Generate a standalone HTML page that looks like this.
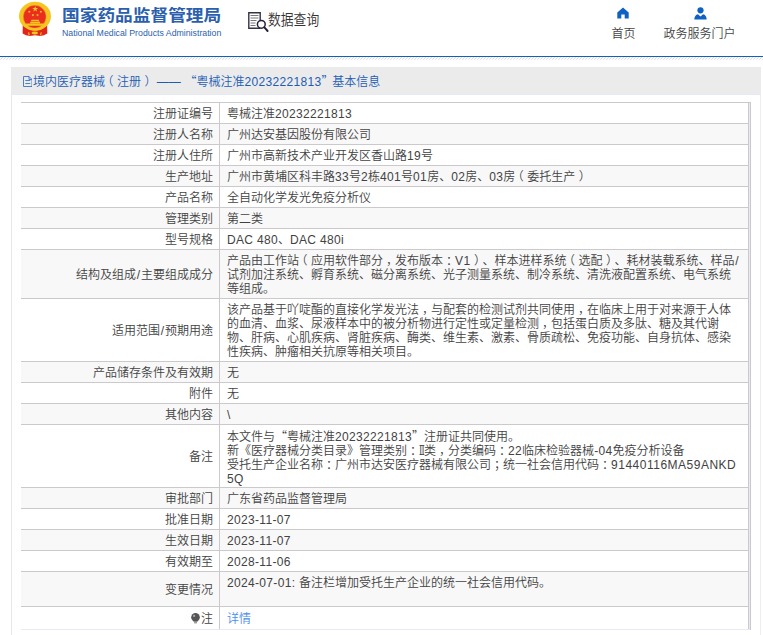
<!DOCTYPE html>
<html lang="zh-CN">
<head>
<meta charset="utf-8">
<title>国家药品监督管理局 数据查询</title>
<style>
html,body{margin:0;padding:0}
body{width:763px;height:635px;overflow:hidden;background:#fff;position:relative;font-family:"Liberation Sans","Noto Sans CJK SC",sans-serif;font-size:12px;font-weight:350;color:#424242;line-height:14px;text-spacing-trim:space-all}
.abs{position:absolute}
.n{letter-spacing:.33px}
.n2{letter-spacing:.5px}
.sl{display:inline-block;width:5px;text-align:center}
.q{font-family:"Noto Sans CJK SC",sans-serif}
.r{font-family:"DejaVu Serif",serif;display:inline-block;width:5px;transform-origin:0 50%;transform:scaleX(.7)}
.q2{margin-right:-5px}
#logo{left:18px;top:0}
#t1{left:62px;top:5.3px;font-size:17.7px;line-height:24px;font-weight:bold;color:#2b5fae;white-space:nowrap;transform-origin:0 0;transform:scaleY(.91)}
#t2{left:62px;top:28.3px;font-size:8.78px;line-height:10px;color:#2b5fae;white-space:nowrap}
#sj{left:248px;top:11.800px}
#sjt{left:268px;top:10.200px;font-size:15px;line-height:20px;color:#333;white-space:nowrap;transform-origin:0 0;transform:scaleX(.853)}
.nav{top:26.500px;height:14px;text-align:center;white-space:nowrap;color:#444}
#bl{left:0;top:56px;width:763px;height:1px;background:#0f62c2}
#hatch{left:0;top:57px;width:763px;height:3px}
#box{left:11px;top:67px;width:750px;height:600px;box-sizing:border-box;border-left:1px solid #e7e7e7;border-right:1px solid #eee}
#bar{left:11px;top:67px;width:750px;height:27px;background:#ebebeb;border-bottom:1px solid #e6eaf6;color:#1c5db5;white-space:nowrap}
#bar .tx{position:absolute;left:22px;top:7px;line-height:14px;text-spacing-trim:space-all}
#tb{left:21px;top:102px;width:730px;height:1px;background:#cbc9cb}
#rb{left:748px;top:103px;width:3px;height:527px;box-sizing:border-box;border-left:1px solid #cbc9cb;border-right:1px solid #cbc9cb;background:#e8eaf5}
.row{position:absolute;left:21px;width:727px;box-sizing:border-box;border-bottom:1px solid #cbc9cb;background:#fff}
.row.g{background:#f8f8f8}
.row.last{border-bottom-color:#e6eaf6}
.k{position:absolute;left:0;top:0;bottom:0;width:199px;box-sizing:border-box;border-right:1px solid #cbc9cb;display:flex;align-items:center;justify-content:flex-end;padding-right:6px;white-space:nowrap}
.v{position:absolute;left:199px;top:0;bottom:0;right:0;display:flex;align-items:center;padding-left:7px;white-space:nowrap}
.row.top .v{align-items:flex-start;padding-top:3px}
.k>span,.v>span{position:relative;top:1px}
.p1,.p2,.p3{position:relative}.p1{left:-3.500px}.p2{left:3.500px}.p3{left:3px}
.lk{color:#4a8df0}
.bulb{vertical-align:-1px;margin-right:2px;position:relative;left:.8px}
</style>
</head>
<body>
<svg id="logo" class="abs" width="36" height="38" viewBox="18 0 36 38">
  <path d="M22.800 24L22.600 33.400Q26 35.800 29.500 35.900L35 35.300L40.500 35.900Q44 35.800 47.300 33.400L47.100 24Z" fill="#e0261a"/>
  <ellipse cx="35" cy="16.300" rx="16" ry="14.500" fill="#f5c520"/>
  <circle cx="34.700" cy="16.700" r="11.400" fill="#ea2f20" stroke="#eeaa1c" stroke-width=".5"/>
  <path d="M30.800 21.300L31.600 19.800H38.600L39.400 21.300ZM30.200 21.700H40V23.300H30.200ZM26.200 23.500H43.600V25.700H26.200Z" fill="#f5c520"/>
  <path d="M35.200 6.100l.75 2h2.100l-1.650 1.300.6 2.050-1.800-1.200-1.800 1.200.6-2.050-1.650-1.300h2.100z" fill="#f5c520"/>
  <circle cx="29.300" cy="11.700" r="1.050" fill="#f3b81e"/><circle cx="40.900" cy="11.700" r="1.050" fill="#f3b81e"/>
  <circle cx="32.900" cy="15.100" r="1.050" fill="#f3b81e"/><circle cx="37.500" cy="15.100" r="1.050" fill="#f3b81e"/>
  <path d="M31.600 29.800Q33 27.300 35 28.600Q37 27.300 38.400 29.800Q36.500 31 35 30.200Q33.500 31 31.600 29.800Z" fill="#f5c520"/>
  <ellipse cx="34.800" cy="33" rx="3.100" ry="1.400" fill="#f5c520"/>
  <path d="M28 32.300l1.300.2.500 2.800-1.200.3zM41.800 32.300l-1.300.2-.5 2.800 1.200.3z" fill="#f3b81e"/>
</svg>
<div id="t1" class="abs">国家药品监督管理局</div>
<div id="t2" class="abs">National Medical Products Administration</div>
<svg id="sj" class="abs" width="21" height="21" viewBox="0 0 21 21">
  <path d="M12.200 16.200H.800V.800h11.400V8" fill="none" stroke="#33334a" stroke-width="1.400"/>
  <path d="M2.500 3.500h8M2.500 6h8M2.500 8.500h6M2.500 11h5M2.500 13.500h5" stroke="#777" stroke-width="1.100"/>
  <circle cx="13.300" cy="12.300" r="3.900" fill="#fff" stroke="#22223a" stroke-width="1.500"/>
  <path d="M16.400 15.400l3.200 3.600" stroke="#22223a" stroke-width="1.900" stroke-linecap="round"/>
</svg>
<div id="sjt" class="abs">数据查询</div>

<svg class="abs" style="left:617px;top:7px" width="12" height="12" viewBox="0 0 12 12"><path d="M6 .4L.3 5.600V11.600H4.300V7.600h3.400v4H11.700V5.600z" fill="#0f62c2"/></svg>
<div class="abs nav" style="left:603.600px;width:40px">首页</div>
<svg class="abs" style="left:694px;top:7px" width="13" height="13" viewBox="0 0 13 13"><circle cx="6.500" cy="3.300" r="3.100" fill="#0f62c2"/><path d="M.3 12.400Q.5 8 4 7.300L6.500 9.600 9 7.300Q12.500 8 12.700 12.400z" fill="#0f62c2"/></svg>
<div class="abs nav" style="left:659.600px;width:80px">政务服务门户</div>

<div id="bl" class="abs"></div>
<svg id="hatch" class="abs" width="763" height="3"><defs><pattern id="hp" width="3" height="3" patternUnits="userSpaceOnUse"><rect x="2" y="0" width="1" height="1" fill="#e0e0e0"/><rect x="1" y="1" width="1" height="1" fill="#dadada"/><rect x="0" y="2" width="1" height="1" fill="#e6e6e6"/></pattern></defs><rect width="763" height="3" fill="url(#hp)"/></svg>

<div id="box" class="abs"></div>
<div id="bar" class="abs">
  <svg class="abs" style="left:11.500px;top:9px" width="9.500" height="11" viewBox="0 0 9.500 11"><path d="M.5.500h5.500l3 3v7h-8.500z" fill="none" stroke="#3a73c4" stroke-width=".9"/><path d="M6 .5v3h3M2.300 4.500h5M2.300 7.500h5" fill="none" stroke="#3a73c4" stroke-width=".9"/></svg>
  <div class="tx">境内医疗器械<span class="p1">（</span>注册<span class="p2">）</span><span class="n"> </span>——<span class="n"> </span><span class="q">“</span>粤械注准<span class="n">20232221813</span><span class="q q2">”</span><span class="n"> </span>基本信息</div>
</div>
<div id="tb" class="abs"></div>
<div class="row" style="top:103px;height:21px"><div class="k"><span>注册证编号</span></div><div class="v"><span>粤械注准<span class="n">20232221813</span></span></div></div>
<div class="row g" style="top:124px;height:21px"><div class="k"><span>注册人名称</span></div><div class="v"><span>广州达安基因股份有限公司</span></div></div>
<div class="row" style="top:145px;height:21px"><div class="k"><span>注册人住所</span></div><div class="v"><span>广州市高新技术产业开发区香山路<span class="n">19</span>号</span></div></div>
<div class="row g" style="top:166px;height:21px"><div class="k"><span>生产地址</span></div><div class="v"><span>广州市黄埔区科丰路<span class="n">33</span>号<span class="n">2</span>栋<span class="n">401</span>号<span class="n">01</span>房、<span class="n">02</span>房、<span class="n">03</span>房<span class="p1">（</span>委托生产<span class="p2">）</span></span></div></div>
<div class="row" style="top:187px;height:21px"><div class="k"><span>产品名称</span></div><div class="v"><span>全自动化学发光免疫分析仪</span></div></div>
<div class="row g" style="top:208px;height:21px"><div class="k"><span>管理类别</span></div><div class="v"><span>第二类</span></div></div>
<div class="row" style="top:229px;height:21px"><div class="k"><span>型号规格</span></div><div class="v"><span><span class="n">DAC 480</span>、<span class="n">DAC 480i</span></span></div></div>
<div class="row g" style="top:250px;height:49px"><div class="k"><span>结构及组成<span class="sl">/</span>主要组成成分</span></div><div class="v"><span>产品由工作站<span class="p1">（</span>应用软件部分<span class="p3">，</span>发布版本<span class="p3">：</span><span class="n">V1</span><span class="p2">）</span>、样本进样系统<span class="p1">（</span>选配<span class="p2">）</span>、耗材装载系统、样品<span class="sl">/</span><br>试剂加注系统、孵育系统、磁分离系统、光子测量系统、制冷系统、清洗液配置系统、电气系统<br>等组成。</span></div></div>
<div class="row" style="top:299px;height:63px"><div class="k"><span>适用范围<span class="sl">/</span>预期用途</span></div><div class="v"><span>该产品基于吖啶酯的直接化学发光法<span class="p3">，</span>与配套的检测试剂共同使用<span class="p3">，</span>在临床上用于对来源于人体<br>的血清、血浆、尿液样本中的被分析物进行定性或定量检测<span class="p3">，</span>包括蛋白质及多肽、糖及其代谢<br>物、肝病、心肌疾病、肾脏疾病、酶类、维生素、激素、骨质疏松、免疫功能、自身抗体、感染<br>性疾病、肿瘤相关抗原等相关项目。</span></div></div>
<div class="row g" style="top:362px;height:21px"><div class="k"><span>产品储存条件及有效期</span></div><div class="v"><span>无</span></div></div>
<div class="row" style="top:383px;height:21px"><div class="k"><span>附件</span></div><div class="v"><span>无</span></div></div>
<div class="row g" style="top:404px;height:21px"><div class="k"><span>其他内容</span></div><div class="v"><span><span class="n">\</span></span></div></div>
<div class="row" style="top:425px;height:63px"><div class="k"><span>备注</span></div><div class="v"><span>本文件与<span class="q">“</span>粤械注准<span class="n">20232221813</span><span class="q">”</span>注册证共同使用。<br>新《医疗器械分类目录》管理类别<span class="p3">：</span><span class="r">Ⅱ</span>类<span class="p3">，</span>分类编码<span class="p3">：</span><span class="n">22</span>临床检验器械<span class="n">-04</span>免疫分析设备<br>受托生产企业名称<span class="p3">：</span>广州市达安医疗器械有限公司<span class="p3">；</span>统一社会信用代码<span class="p3">：</span><span class="n2">91440116MA59ANKD</span><br><span class="n">5Q</span></span></div></div>
<div class="row g" style="top:488px;height:21px"><div class="k"><span>审批部门</span></div><div class="v"><span>广东省药品监督管理局</span></div></div>
<div class="row" style="top:509px;height:21px"><div class="k"><span>批准日期</span></div><div class="v"><span><span class="n">2023-11-07</span></span></div></div>
<div class="row g" style="top:530px;height:21px"><div class="k"><span>生效日期</span></div><div class="v"><span><span class="n">2023-11-07</span></span></div></div>
<div class="row" style="top:551px;height:21px"><div class="k"><span>有效期至</span></div><div class="v"><span><span class="n">2028-11-06</span></span></div></div>
<div class="row g top" style="top:572px;height:35px"><div class="k"><span>变更情况</span></div><div class="v"><span><span class="n">2024-07-01: </span>备注栏增加受托生产企业的统一社会信用代码。</span></div></div>
<div class="row last" style="top:607px;height:23px"><div class="k"><span><svg class="bulb" width="9" height="11" viewBox="0 0 9 11"><circle cx="4.5" cy="4.3" r="4.3" fill="#555"/><path d="M2.4 7.2h4.2v1.3H2.4z" fill="#555"/><path d="M3 9.3h3v1H3z" fill="#777"/><circle cx="3.1" cy="2.9" r="1.1" fill="#aaa"/></svg>注</span></div><div class="v"><span><span class="lk">详情</span></span></div></div>
<div id="rb" class="abs"></div>
<div class="abs" style="left:748px;top:629px;width:2px;height:1px;background:#e6eaf6"></div>
</body>
</html>
